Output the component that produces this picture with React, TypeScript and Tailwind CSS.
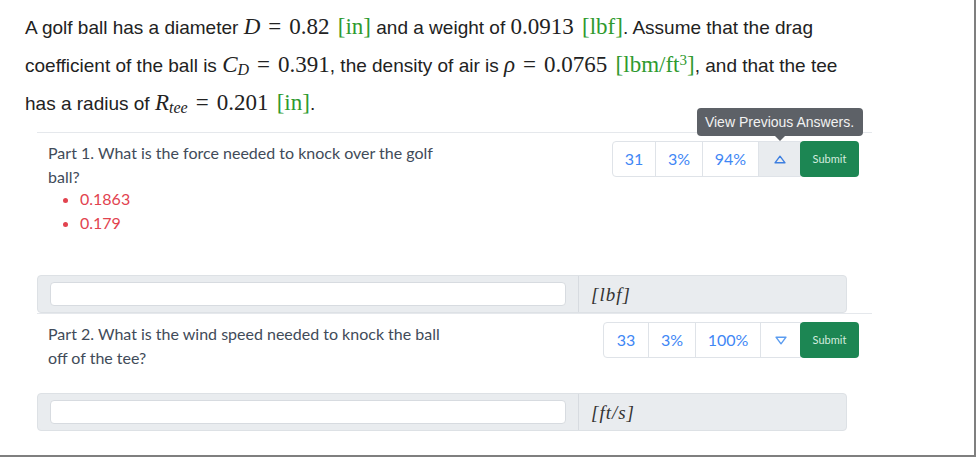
import React from "react";

const serif = "font-['Liberation_Serif',serif] leading-none";

const Unit = ({ children }: { children: React.ReactNode }) => (
  <span className={`${serif} text-[23px] text-[#2f9a2f] ml-[3px]`}>[{children}]</span>
);

const Num = ({ children }: { children: React.ReactNode }) => (
  <span className={`${serif} text-[23px]`}>{children}</span>
);

const V = ({ children }: { children: React.ReactNode }) => (
  <span className={`${serif} italic text-[23px]`}>{children}</span>
);

const Eq = () => <span className={`${serif} text-[23px] mx-[8px]`}>=</span>;

const Arrow = ({ up }: { up: boolean }) => (
  <svg width="12" height="9" viewBox="0 0 12 9" fill="none">
    {up ? (
      <path d="M6 1.2 L11 7.8 H1 Z" stroke="#3d7fe0" strokeWidth="1.4" strokeLinejoin="round" />
    ) : (
      <path d="M1 1.2 H11 L6 7.8 Z" stroke="#5a9cf0" strokeWidth="1.4" strokeLinejoin="round" />
    )}
  </svg>
);

type Cell = { label: string; w: string };

const Buttons = ({ cells, arrowW, up, tip }: { cells: Cell[]; arrowW: string; up: boolean; tip?: boolean }) => (
  <div className="flex h-[36px] font-['Lato',sans-serif] text-[16px]">
    <div className="flex border border-[#dfe3e8] rounded-l-[4px]">
      {cells.map((c, i) => (
        <div
          key={c.label}
          className={`${c.w} flex items-center justify-center text-[#3f87f5] ${i > 0 ? "border-l border-[#dfe3e8]" : ""}`}
        >
          {c.label}
        </div>
      ))}
      <div
        className={`${arrowW} relative flex items-center justify-center border-l border-[#dfe3e8] ${tip ? "bg-[#e9ecef]" : "bg-white"}`}
      >
        <Arrow up={up} />
        {tip && (
          <div className="absolute bottom-full left-1/2 -translate-x-1/2 mb-[6px] w-[166px] h-[28px] rounded-[4px] bg-[#5d6167] text-[#f2f2f2] text-[14px] font-['Liberation_Sans',sans-serif] flex items-center justify-center">
            View Previous Answers.
            <span className="absolute top-full left-1/2 -translate-x-1/2 w-0 h-0 border-l-[5px] border-r-[5px] border-t-[5px] border-l-transparent border-r-transparent border-t-[#5d6167]" />
          </div>
        )}
      </div>
    </div>
    <div className="w-[59px] flex items-center justify-center bg-[#1c8653] text-[#d4ecdf] text-[11px] rounded-[4px] -ml-px">
      Submit
    </div>
  </div>
);

const AnswerBox = ({ unit }: { unit: React.ReactNode }) => (
  <div className="w-[810px] h-[38px] flex items-stretch bg-[#e9ecef] border border-[#dde1e5] rounded-[4px]">
    <div className="w-[540px] flex items-center pl-[12px] pr-[12px]">
      <div className="w-full h-[24px] bg-white border border-[#d7dbe0] rounded-[4px]" />
    </div>
    <div className={`flex items-center pl-[12px] border-l border-[#d7dbe0] ${serif} italic text-[19px] tracking-[1px] text-[#333]`}>
      {unit}
    </div>
  </div>
);

export default function App() {
  return (
    <div className="w-[976px] h-[457px] bg-white border-r-2 border-b-2 border-[#7f7f7f] overflow-hidden">
      <div className="pl-[25px] pt-[9px] font-['Liberation_Sans',sans-serif] text-[19px] leading-[38px] text-[#222]">
        <div className="h-[38px] whitespace-nowrap">
          A golf ball has a diameter <V>D</V>
          <Eq />
          <Num>0.82</Num> <Unit>in</Unit> and a weight of <Num>0.0913</Num> <Unit>lbf</Unit>. Assume that the drag
        </div>
        <div className="h-[38px] whitespace-nowrap">
          coefficient of the ball is{" "}
          <V>
            C<sub className="text-[16px] relative top-[3px]">D</sub>
          </V>
          <Eq />
          <Num>0.391</Num>, the density of air is <V>ρ</V>
          <Eq />
          <Num>0.0765</Num>{" "}
          <Unit>
            lbm/ft<sup className="text-[15px]">3</sup>
          </Unit>
          , and that the tee
        </div>
        <div className="h-[38px] whitespace-nowrap">
          has a radius of{" "}
          <V>
            R<sub className="text-[16px] relative top-[3px]">tee</sub>
          </V>
          <Eq />
          <Num>0.201</Num> <Unit>in</Unit>.
        </div>
      </div>

      <div className="ml-[37px] w-[835px] mt-[9px] border-t border-[#e5e8ec]">
        <div className="border-b border-[#e5e8ec]">
          <div className="flex justify-between items-start pt-[8px] pr-[13px]">
            <div className="pl-[11px] font-['Lato',sans-serif] text-[16px] leading-[24px] text-[#414b59]">
              <div>
                Part 1. What is the force needed to knock over the golf
                <br />
                ball?
              </div>
              <ul className="list-disc pl-[32px] -mt-[2px] text-[#e2434f] marker:text-[#e2434f]">
                <li>0.1863</li>
                <li>0.179</li>
              </ul>
            </div>
            <Buttons
              cells={[
                { label: "31", w: "w-[42px]" },
                { label: "3%", w: "w-[47px]" },
                { label: "94%", w: "w-[56px]" },
              ]}
              arrowW="w-[42px]"
              up
              tip
            />
          </div>
          <div className="mt-[40px]">
            <AnswerBox unit={<span>[lbf]</span>} />
          </div>
        </div>

        <div className="flex justify-between items-start pt-[8px] pr-[13px]">
          <div className="pl-[11px] font-['Lato',sans-serif] text-[16px] leading-[24px] text-[#414b59]">
            Part 2. What is the wind speed needed to knock the ball
            <br />
            off of the tee?
          </div>
          <Buttons
            cells={[
              { label: "33", w: "w-[44px]" },
              { label: "3%", w: "w-[47px]" },
              { label: "100%", w: "w-[65px]" },
            ]}
            arrowW="w-[40px]"
            up={false}
          />
        </div>
        <div className="mt-[23px]">
          <AnswerBox unit={<span>[ft/s]</span>} />
        </div>
      </div>
    </div>
  );
}
